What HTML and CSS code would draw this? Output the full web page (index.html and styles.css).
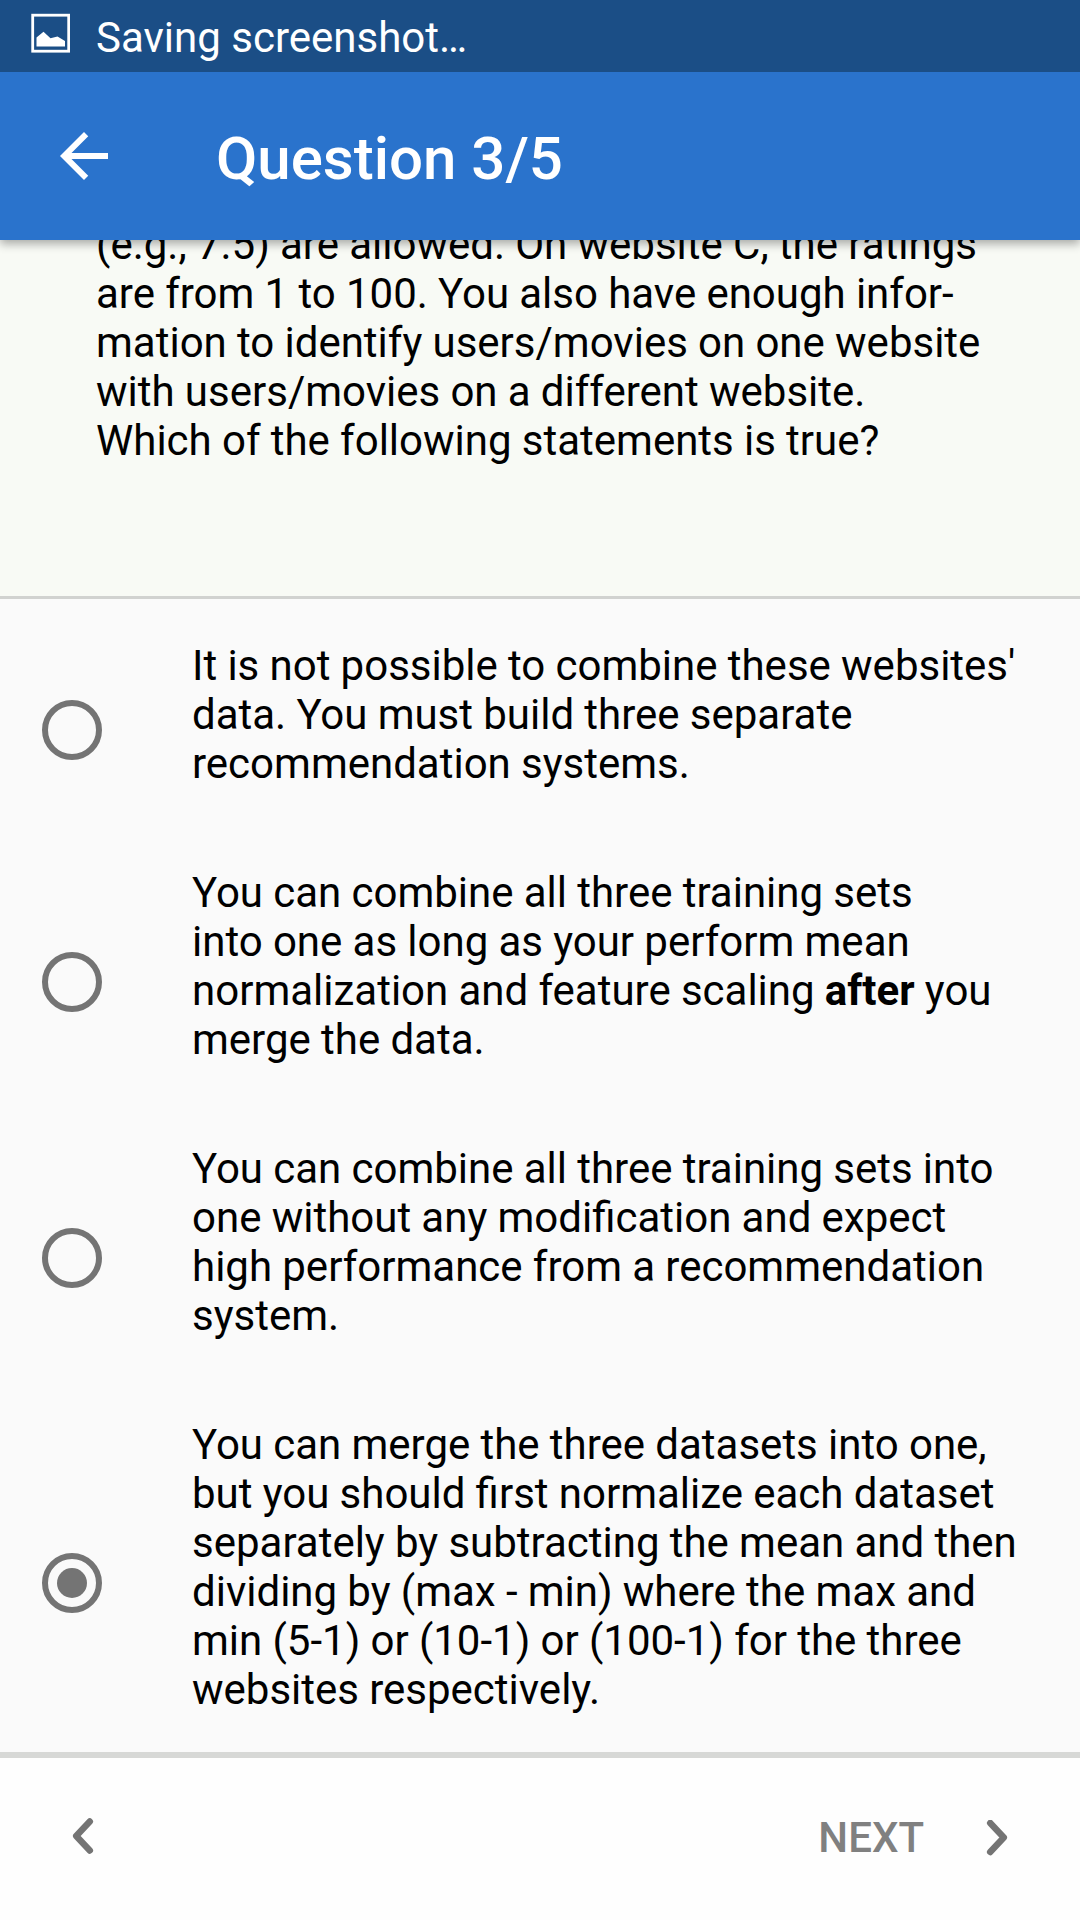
FILE: index.html
```html
<!DOCTYPE html>
<html lang="en">
<head>
<meta charset="utf-8">
<title>Question 3/5</title>
<link rel="stylesheet" href="styles.css">
</head>
<body>
<div class="screen">
  <div class="status-bar">
    <svg class="status-icon" viewBox="0 0 40 40" width="40" height="40">
      <rect x="2.700" y="2.200" width="36" height="36" fill="none" stroke="#fff" stroke-width="2.800"/>
      <path d="M6.500 33.500V24.500L13.500 18.800L20.500 25.300L27.500 23.400L35 28V33.500Z" fill="#fff"/>
    </svg>
    <span>Saving screenshot…</span>
  </div>
  <header class="app-bar">
    <svg class="back" viewBox="0 0 24 24" width="72" height="72"><path fill="#fff" d="M20 11H7.830l5.590-5.590L12 4l-8 8 8 8 1.410-1.410L7.830 13H20v-2z"/></svg>
    <h1>Question 3/5</h1>
  </header>
  <section class="question">
    <p>(e.g., 7.5) are allowed. On website C, the ratings<br>are from 1 to 100. You also have enough infor-<br>mation to identify users/movies on one website<br>with users/movies on a different website.<br>Which of the following statements is true?</p>
  </section>
  <main class="options">
    <label class="option"><span class="radio"></span><span class="label">It is not possible to combine these websites'<br>data. You must build three separate<br>recommendation systems.</span></label>
    <label class="option"><span class="radio"></span><span class="label">You can combine all three training sets<br>into one as long as your perform mean<br>normalization and feature scaling <b>after</b> you<br>merge the data.</span></label>
    <label class="option"><span class="radio"></span><span class="label">You can combine all three training sets into<br>one without any modification and expect<br>high performance from a recommendation<br>system.</span></label>
    <label class="option"><span class="radio checked"></span><span class="label">You can merge the three datasets into one,<br>but you should first normalize each dataset<br>separately by subtracting the mean and then<br>dividing by (max - min) where the max and<br>min (5-1) or (10-1) or (100-1) for the three<br>websites respectively.</span></label>
  </main>
  <footer class="nav-bar">
    <svg class="chevron" viewBox="0 0 22 36" width="22" height="36"><path d="M17.800 3.500L4.200 18L17.800 32.500"/></svg>
    <div class="next">
      <span>NEXT</span>
      <svg class="chevron" viewBox="0 0 22 36" width="22" height="36"><path d="M4.200 3L17.800 17.500L4.200 32"/></svg>
    </div>
  </footer>
</div>
</body>
</html>
```
FILE: styles.css
```css
* { box-sizing: border-box; }

body {
  margin: 0;
  background: #fafafa;
  font-family: Roboto, "Liberation Sans", sans-serif;
  font-size: 42px;
  line-height: 49px;
  color: #000;
}

.screen {
  display: flex;
  flex-direction: column;
  width: 1080px;
  height: 1920px;
  overflow: hidden;
}

.status-bar {
  display: flex;
  align-items: flex-start;
  gap: 26px;
  height: 72px;
  padding: 13px 0 0 30px;
  background: #1b4e86;
  color: #fff;
  z-index: 2;
}

.app-bar {
  display: flex;
  align-items: center;
  gap: 96px;
  height: 168px;
  padding-left: 48px;
  background: #2a73cc;
  color: #fff;
  box-shadow: 0 4px 9px rgba(0, 0, 0, 0.32);
  z-index: 1;
}

.app-bar h1 {
  margin: 6px 0 0;
  font-size: 60px;
  line-height: 70px;
  font-weight: 500;
}

.question {
  display: flex;
  align-items: flex-end;
  height: 359px;
  padding: 0 0 131px 96px;
  background: #f8faf5;
  border-bottom: 3px solid #d1d2d0;
}

.question p {
  margin: 0;
  white-space: nowrap;
  word-spacing: -0.2px;
}

.options {
  display: flex;
  flex-direction: column;
  gap: 80px;
  height: 1153px;
  padding: 42px 0 0 42px;
}

.option {
  display: flex;
  align-items: center;
  gap: 90px;
  white-space: nowrap;
  word-spacing: -0.2px;
}

.radio {
  display: flex;
  align-items: center;
  justify-content: center;
  flex: none;
  width: 60px;
  height: 60px;
  margin-top: 31px;
  border: 6px solid #747474;
  border-radius: 50%;
}

.radio.checked::after {
  content: "";
  width: 30px;
  height: 30px;
  border-radius: 50%;
  background: #747474;
}

.nav-bar {
  display: flex;
  flex: 1;
  align-items: flex-start;
  justify-content: space-between;
  padding: 60px 72px 0;
  background: #fefefe;
  border-top: 6px solid #d7d8d6;
}

.chevron path {
  fill: none;
  stroke: #747474;
  stroke-width: 6.5px;
  stroke-linecap: round;
  stroke-linejoin: round;
}

.next {
  display: flex;
  align-items: center;
  gap: 62px;
  margin-top: -5px;
  font-weight: 500;
  color: #808080;
}
```
